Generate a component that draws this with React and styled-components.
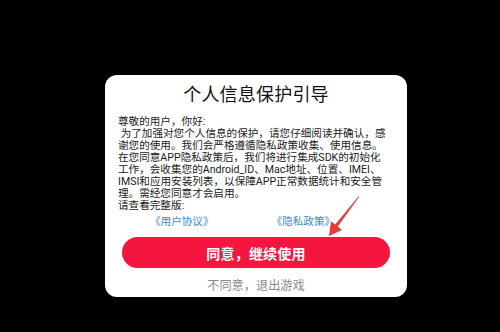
import * as React from 'react'
import styled, { createGlobalStyle } from 'styled-components'

const GlobalStyle = createGlobalStyle`
  html, body {
    margin: 0;
    padding: 0;
    background: #000;
  }
  body {
    font-family: Roboto, "Noto Sans CJK SC", sans-serif;
  }
`

const Screen = styled.div`
  width: 500px;
  height: 332px;
  background: #000;
  padding: 75px 0 0 105px;
  box-sizing: border-box;
  overflow: hidden;
`

const Dialog = styled.section`
  position: relative;
  width: 302px;
  height: 222px;
  background: #fff;
  border-radius: 12px;
  display: flex;
  flex-direction: column;
  box-sizing: border-box;
  padding-top: 8px;
`

const Title = styled.h2`
  margin: 0;
  font-size: 18px;
  line-height: 24px;
  font-weight: 400;
  color: #111;
  text-align: center;
  letter-spacing: 0.2px;
`

const Body = styled.p`
  margin: 9px 0 0;
  padding: 0 0 0 13px;
  font-size: 10.6px;
  line-height: 12px;
  color: #1a1a1a;
  white-space: pre;
`

const Links = styled.div`
  display: flex;
  padding-left: 45px;
  gap: 58px;
  height: 12px;
  margin-top: 4px;
  align-items: center;
`

const LinkText = styled.a`
  font-size: 10.6px;
  line-height: 12px;
  color: #3d8bd0;
  text-decoration: none;
`

const AgreeButton = styled.button`
  margin: 9px 17px 0;
  height: 31px;
  border: none;
  border-radius: 16px;
  background: #f5163f;
  color: #fff;
  font-family: inherit;
  font-size: 14px;
  font-weight: 700;
  letter-spacing: 0.2px;
  padding: 0;
`

const Decline = styled.div`
  margin-top: 10px;
  text-align: center;
  font-size: 12.2px;
  line-height: 16px;
  color: #8a8a8a;
`

const Pointer = styled.svg`
  position: absolute;
  left: 0;
  top: 0;
  overflow: visible;
  pointer-events: none;
`

const lines = [
  '尊敬的用户，你好:',
  ' 为了加强对您个人信息的保护，请您仔细阅读并确认，感',
  '谢您的使用。我们会严格遵循隐私政策收集、使用信息。',
  '在您同意APP隐私政策后，我们将进行集成SDK的初始化',
  '工作，会收集您的Android_ID、Mac地址、位置、IMEI、',
  'IMSI和应用安装列表，以保障APP正常数据统计和安全管',
  '理。需经您同意才会启用。',
  '请查看完整版:',
]

export default function App() {
  return (
    <>
      <GlobalStyle />
      <Screen>
        <Dialog>
          <Title>个人信息保护引导</Title>
          <Body>{lines.join('\n')}</Body>
          <Links>
            <LinkText>《用户协议》</LinkText>
            <LinkText>《隐私政策》</LinkText>
          </Links>
          <AgreeButton>同意，继续使用</AgreeButton>
          <Decline>不同意，退出游戏</Decline>
          <Pointer width="302" height="222" viewBox="0 0 302 222">
            <polygon
              points="254.4,121.6 232.8,151.6 237,155 224,161 226,146.2 230.2,149.6 253.6,121.2"
              fill="#ea3b3b"
            />
          </Pointer>
        </Dialog>
      </Screen>
    </>
  )
}
